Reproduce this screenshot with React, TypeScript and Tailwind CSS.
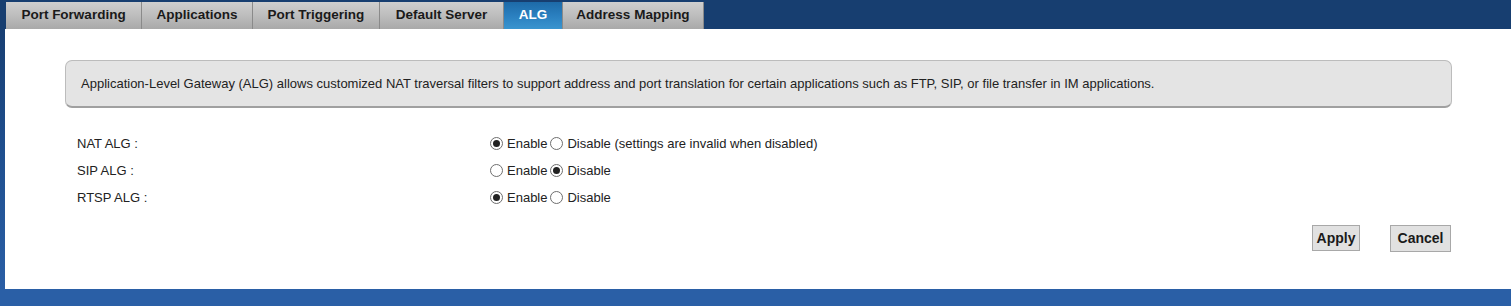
import React from "react";

const tabs = [
  { label: "Port Forwarding", w: 136 },
  { label: "Applications", w: 111 },
  { label: "Port Triggering", w: 127 },
  { label: "Default Server", w: 124 },
  { label: "ALG", w: 59, active: true },
  { label: "Address Mapping", w: 141 },
];

function Radio({ checked }: { checked: boolean }) {
  return (
    <span className="inline-flex h-[13px] w-[13px] items-center justify-center rounded-full border border-[#6e6e6e] bg-white">
      {checked && <span className="h-[7px] w-[7px] rounded-full bg-[#222]" />}
    </span>
  );
}

function Row({ label, enable, note }: { label: string; enable: boolean; note?: string }) {
  return (
    <div className="flex h-[27px] items-center">
      <div className="w-[425px] pl-[12px] text-[13px] text-[#222]">{label}</div>
      <div className="flex items-center text-[13px] text-[#222]">
        <Radio checked={enable} />
        <span className="ml-[4px] mr-[3px]">Enable</span>
        <Radio checked={!enable} />
        <span className="ml-[4px]">Disable{note ? " " + note : ""}</span>
      </div>
    </div>
  );
}

export default function App() {
  return (
    <div
      className="flex h-[306px] w-[1511px] flex-col bg-gradient-to-b from-[#163b6c] via-[#1f4f8f] to-[#2b60a8]"
      style={{ fontFamily: '"Liberation Sans", Arial, sans-serif' }}
    >
      <div className="flex h-[29px] items-end bg-[#173e70] pl-[6px]">
        <div className="flex h-[27px]">
          {tabs.map((t) => (
            <div
              key={t.label}
              style={{ width: t.w }}
              className={
                "flex items-center justify-center border-r border-[#8a8a8a] text-[13.5px] font-bold " +
                (t.active
                  ? "bg-gradient-to-b from-[#1d6aa8] via-[#2a7fbf] to-[#3a95cf] text-white"
                  : "bg-gradient-to-b from-[#cfcfcf] via-[#bdbdbd] to-[#a9a9a9] text-[#1a1a1a]")
              }
            >
              {t.label}
            </div>
          ))}
        </div>
      </div>
      <div className="ml-[5px] flex h-[260px] flex-col bg-white">
        <div className="ml-[60px] mr-[59px] mt-[31px] flex h-[48px] items-center rounded-[7px] border border-[#bcbcbc] border-b-[2px] border-b-[#a0a0a0] bg-[#e4e4e4] pl-[15px] text-[13px] text-[#222]">
          Application-Level Gateway (ALG) allows customized NAT traversal filters to support address and port translation for certain applications such as FTP, SIP, or file transfer in IM applications.
        </div>
        <div className="mt-[22px] flex flex-col pl-[60px]">
          <Row label="NAT ALG :" enable={true} note="(settings are invalid when disabled)" />
          <Row label="SIP ALG :" enable={false} />
          <Row label="RTSP ALG :" enable={true} />
        </div>
        <div className="mt-[14px] flex justify-end gap-[30px] pr-[60px]">
          <button className="h-[26px] w-[48px] border border-[#a8a8a8] bg-[#e1e1e1] text-[14px] font-bold text-[#1a1a1a]">
            Apply
          </button>
          <button className="h-[27px] w-[61px] border border-[#a8a8a8] bg-[#e1e1e1] text-[14px] font-bold text-[#1a1a1a]">
            Cancel
          </button>
        </div>
      </div>
      <div className="flex-1 bg-[#2a5fa6]" />
    </div>
  );
}
